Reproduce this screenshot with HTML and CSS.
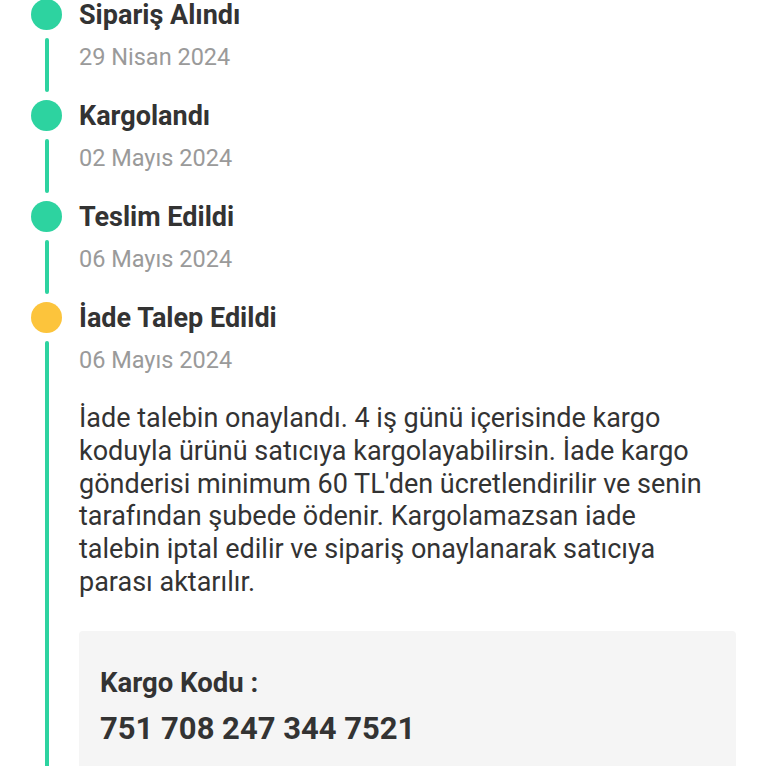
FILE: index.html
```html
<!DOCTYPE html>
<html lang="tr">
<head>
<meta charset="utf-8">
<link rel="stylesheet" href="styles.css">
</head>
<body>
<div class="timeline">
  <div class="step">
    <span class="dot dot-green"></span>
    <div class="title">Sipariş Alındı</div>
    <span class="rail"></span>
    <div class="body"><div class="date">29 Nisan 2024</div></div>
  </div>
  <div class="step">
    <span class="dot dot-green"></span>
    <div class="title">Kargolandı</div>
    <span class="rail"></span>
    <div class="body"><div class="date">02 Mayıs 2024</div></div>
  </div>
  <div class="step">
    <span class="dot dot-green"></span>
    <div class="title">Teslim Edildi</div>
    <span class="rail"></span>
    <div class="body"><div class="date">06 Mayıs 2024</div></div>
  </div>
  <div class="step step-last">
    <span class="dot dot-yellow"></span>
    <div class="title">İade Talep Edildi</div>
    <span class="rail rail-last"></span>
    <div class="body">
      <div class="date">06 Mayıs 2024</div>
      <p class="desc">İade talebin onaylandı. 4 iş günü içerisinde kargo koduyla ürünü satıcıya kargolayabilirsin. İade kargo gönderisi minimum 60 TL'den ücretlendirilir ve senin tarafından şubede ödenir. Kargolamazsan iade talebin iptal edilir ve sipariş onaylanarak satıcıya parası aktarılır.</p>
      <div class="code-box">
        <div class="code-label">Kargo Kodu :</div>
        <div class="code-value">751 708 247 344 7521</div>
      </div>
    </div>
  </div>
</div>
</body>
</html>
```
FILE: styles.css
```css
html, body {
  margin: 0;
  padding: 0;
  background: #ffffff;
  font-family: Roboto, "Noto Sans", sans-serif;
  color: #333333;
  overflow: hidden;
}
.timeline {
  margin-top: -1px;
  padding-left: 31px;
  padding-right: 32px;
}
.step {
  display: grid;
  grid-template-columns: 31px 1fr;
  grid-template-rows: 31px auto;
  column-gap: 17px;
}
.dot {
  width: 31px;
  height: 31px;
  border-radius: 50%;
  grid-column: 1;
  grid-row: 1;
}
.dot-green { background: #2dd3a0; }
.dot-yellow { background: #fcc43c; }
.title {
  grid-column: 2;
  grid-row: 1;
  font-size: 27px;
  line-height: 33px;
  font-weight: 700;
  color: #333333;
  white-space: nowrap;
}
.rail {
  grid-column: 1;
  grid-row: 2;
  width: 4px;
  justify-self: center;
  margin: 8px 0 8px;
  background: #2dd3a0;
  border-radius: 2px;
}
.rail-last {
  margin-bottom: 0;
  border-radius: 2px 2px 0 0;
}
.body {
  grid-column: 2;
  grid-row: 2;
  padding-top: 12px;
  padding-bottom: 28px;
}
.date {
  font-size: 23.5px;
  line-height: 30px;
  color: #9a9a9a;
}
.step-last .body {
  padding-bottom: 0;
}
.desc {
  margin: 27px 20px 0 0;
  font-size: 27px;
  line-height: 32.8px;
  color: #333333;
}
.code-box {
  margin-top: 32px;
  background: #f5f5f5;
  border-radius: 4px 4px 0 0;
  padding: 36px 21px 19px;
}
.code-label {
  font-size: 27.5px;
  line-height: 32px;
  font-weight: 700;
  color: #333333;
}
.code-value {
  margin-top: 12px;
  font-size: 31px;
  line-height: 36px;
  font-weight: 700;
  color: #333333;
}
```
